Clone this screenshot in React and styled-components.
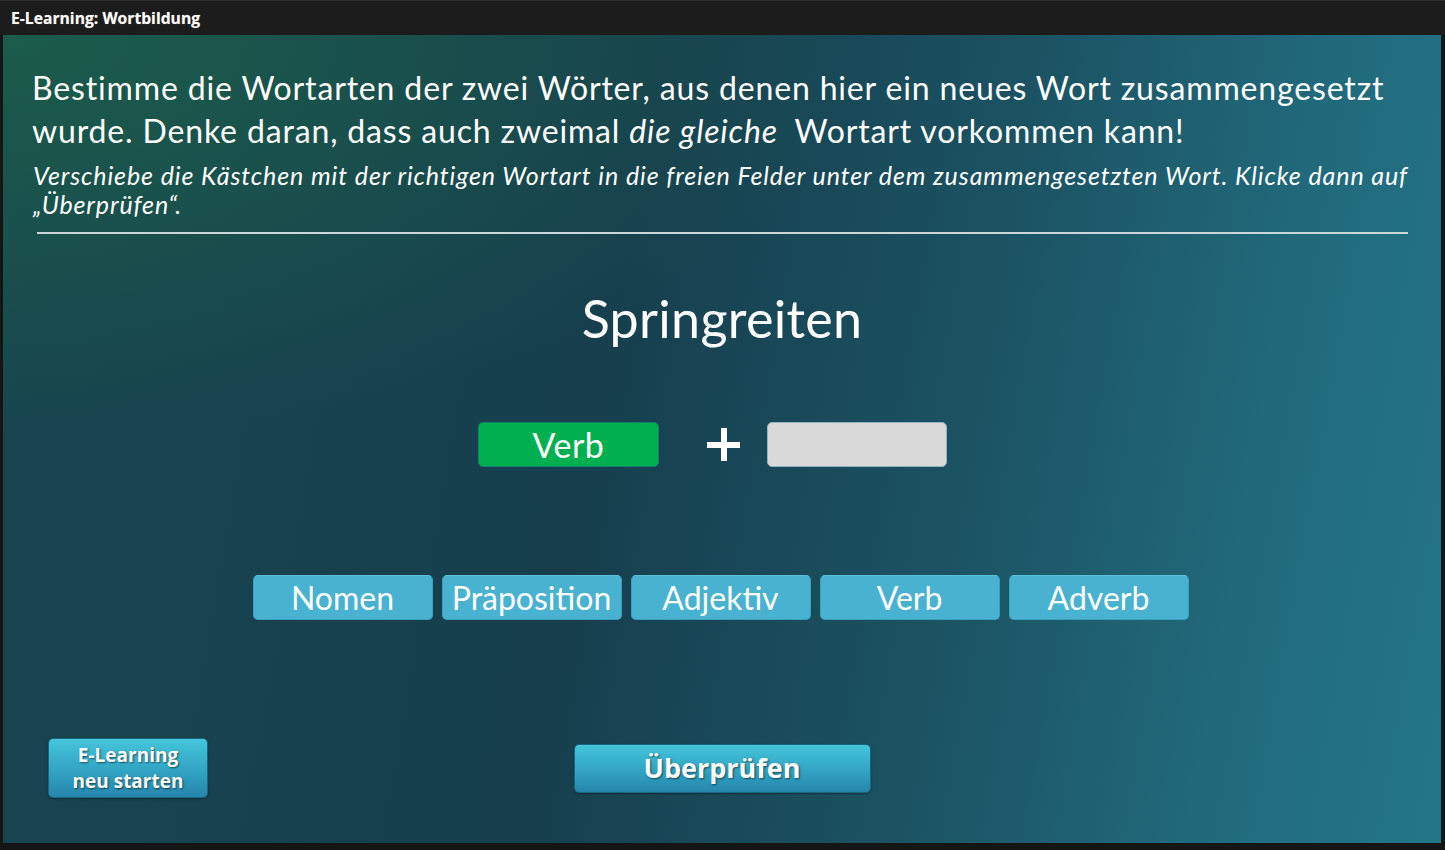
import React from 'react';
import styled, { createGlobalStyle } from 'styled-components';

const GlobalStyle = createGlobalStyle`
  html, body {
    margin: 0;
    padding: 0;
    background: #151515;
  }
  * {
    box-sizing: border-box;
  }
`;

const Window = styled.div`
  width: 1445px;
  height: 850px;
  display: flex;
  flex-direction: column;
  background: #151515;
  overflow: hidden;
`;

const TitleBar = styled.header`
  height: 35px;
  flex-shrink: 0;
  display: flex;
  align-items: center;
  padding: 0 11px;
  background: #1c1c1c;
  border-top: 1px solid #2e2e2e;
  color: #fff;
  font-family: "Open Sans", sans-serif;
  font-weight: 700;
  font-size: 15.7px;
  text-shadow: 0 0 1px rgba(255, 240, 200, 0.4);
`;

const Stage = styled.main`
  flex: 1;
  margin: 0 4px 7px 3px;
  display: flex;
  flex-direction: column;
  color: #fff;
  font-family: Lato, "Noto Sans", sans-serif;
  background:
    radial-gradient(ellipse 60% 50% at 0% 0%, rgba(28, 96, 74, 0.85), rgba(28, 96, 74, 0) 100%),
    linear-gradient(100deg, #18454f 0%, #173f4e 42%, #1b5262 65%, #216a7c 85%, #237688 100%);
`;

const Instructions = styled.section`
  padding: 31px 33px 0 29px;
`;

const Prompt = styled.p`
  margin: 0;
  font-size: 32px;
  line-height: 43px;
  letter-spacing: 0.85px;
  white-space: nowrap;

  em {
    font-style: italic;
    margin-right: 8px;
  }
`;

const Hint = styled.p`
  margin: 9px 0 0 1px;
  font-size: 25px;
  line-height: 29px;
  font-style: italic;
  letter-spacing: 0.9px;
  white-space: nowrap;
`;

const Divider = styled.hr`
  margin: 13px 0 0 5px;
  border: none;
  height: 2px;
  background: #c9d6da;
`;

const Word = styled.h1`
  margin: 54px 0 0;
  font-size: 52px;
  line-height: 60px;
  font-weight: 400;
  letter-spacing: 0.3px;
  text-align: center;
`;

const DropRow = styled.div`
  margin-top: 74px;
  display: flex;
  justify-content: center;
  align-items: center;
  padding-right: 19px;
`;

const Slot = styled.div`
  width: ${p => p.$width}px;
  height: 45px;
  border-radius: 5px;
  display: flex;
  align-items: center;
  justify-content: center;
  font-size: 34px;
  letter-spacing: 0.5px;
  color: #fff;
  background: ${p => (p.$filled ? '#00b050' : '#d9d9d9')};
  border: 1px solid ${p => (p.$filled ? '#13806a' : '#8fb3c0')};
`;

const Plus = styled.div`
  position: relative;
  width: 33px;
  height: 33px;
  margin: 0 27px 0 48px;

  &::before,
  &::after {
    content: '';
    position: absolute;
    background: #fff;
  }
  &::before {
    left: 0;
    right: 0;
    top: 14px;
    height: 6px;
  }
  &::after {
    top: 0;
    bottom: 0;
    left: 14px;
    width: 6px;
  }
`;

const ChipRow = styled.div`
  margin-top: 108px;
  display: flex;
  justify-content: center;
  gap: 9px;
  padding-right: 3px;
`;

const Chip = styled.div`
  width: 180px;
  height: 45px;
  border-radius: 5px;
  display: flex;
  align-items: center;
  justify-content: center;
  background: #48b2d0;
  border: 1px solid #3b9fbf;
  border-top-color: #5cc0da;
  font-size: 32px;
  color: #fff;
`;

const Footer = styled.footer`
  margin-top: 118px;
  height: 60px;
  display: grid;
  grid-template-columns: 1fr auto 1fr;
  align-items: center;
`;

const ActionButton = styled.button`
  width: ${p => p.$width}px;
  height: ${p => p.$height}px;
  border-radius: 5px;
  border: 1px solid #1b6680;
  background: linear-gradient(to bottom, #45c5da 0%, #33a7c6 50%, #2586ab 100%);
  color: #fff;
  font-family: "Open Sans", sans-serif;
  font-weight: 700;
  font-size: ${p => p.$size}px;
  line-height: ${p => p.$line}px;
  text-shadow: 1px 1px 2px rgba(0, 0, 0, 0.55);
  box-shadow: 0 1px 2px rgba(0, 0, 0, 0.35);
  padding: 0;
  cursor: pointer;
`;

const Left = styled.div`
  padding-left: 45px;
  justify-self: start;
`;

const words = ['Nomen', 'Präposition', 'Adjektiv', 'Verb', 'Adverb'];

export default function App() {
  return (
    <Window>
      <GlobalStyle />
      <TitleBar>E-Learning: Wortbildung</TitleBar>
      <Stage>
        <Instructions>
          <Prompt>
            Bestimme die Wortarten der zwei Wörter, aus denen hier ein neues Wort zusammengesetzt
            <br />
            wurde. Denke daran, dass auch zweimal <em>die gleiche</em> Wortart vorkommen kann!
          </Prompt>
          <Hint>
            Verschiebe die Kästchen mit der richtigen Wortart in die freien Felder unter dem zusammengesetzten Wort. Klicke dann auf
            <br />
            „Überprüfen“.
          </Hint>
          <Divider />
        </Instructions>

        <Word>Springreiten</Word>

        <DropRow>
          <Slot $filled $width={181}>Verb</Slot>
          <Plus />
          <Slot $width={180} />
        </DropRow>

        <ChipRow>
          {words.map(w => (
            <Chip key={w}>{w}</Chip>
          ))}
        </ChipRow>

        <Footer>
          <Left>
            <ActionButton $width={160} $height={60} $size={19} $line={26}>
              E-Learning
              <br />
              neu starten
            </ActionButton>
          </Left>
          <ActionButton $width={297} $height={49} $size={27} $line={36}>
            Überprüfen
          </ActionButton>
          <div />
        </Footer>
      </Stage>
    </Window>
  );
}
